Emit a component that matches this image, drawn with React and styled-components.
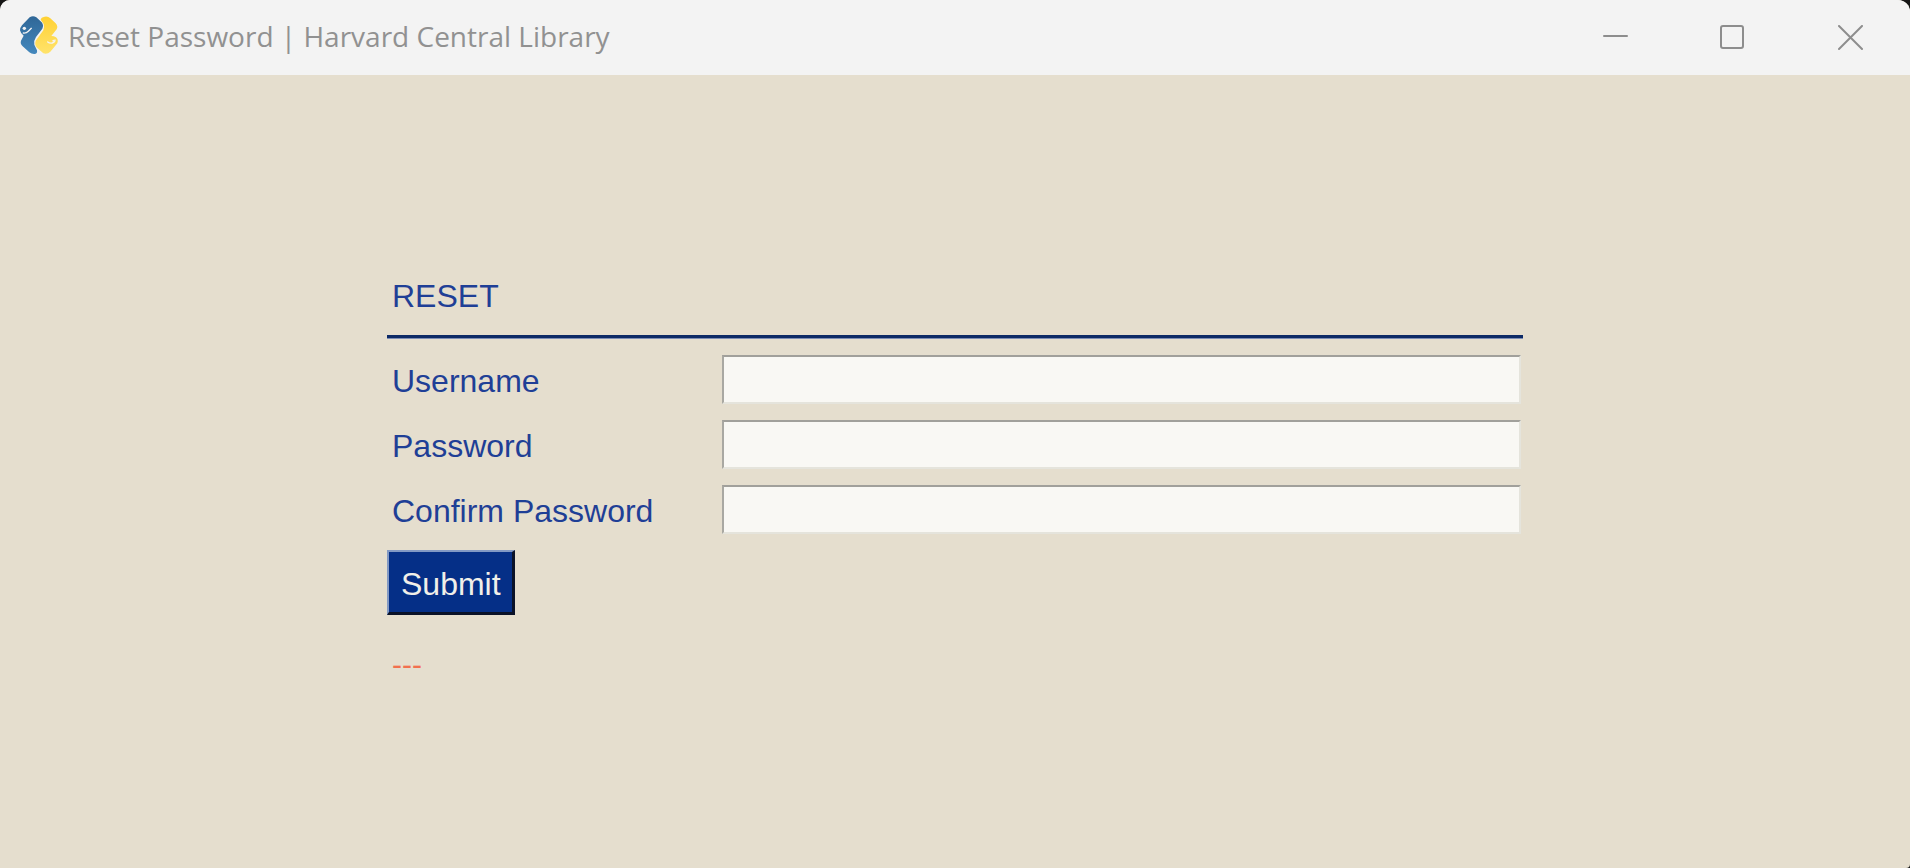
import React from "react";
import styled, { createGlobalStyle } from "styled-components";

const GlobalStyle = createGlobalStyle`
  *, *::before, *::after { box-sizing: border-box; }
  body {
    margin: 0;
    background: #151515;
    font-family: "Liberation Sans", Arial, sans-serif;
  }
`;

const Window = styled.div`
  display: flex;
  flex-direction: column;
  min-height: 100vh;
  overflow: hidden;
  border-radius: 10px 12px 4px 0;
  background: #e5dece;
`;

const TitleBar = styled.header`
  display: flex;
  align-items: center;
  height: 75px;
  padding-left: 19px;
  background: #f3f3f3;
`;

const Logo = styled.svg`
  flex: none;
  width: 40px;
  height: 40px;
  margin-bottom: 6px;
`;

const WindowTitle = styled.h1`
  flex: 1;
  margin: 0 0 4px 9px;
  overflow: hidden;
  white-space: nowrap;
  font: 400 28px/40px "Open Sans", "Noto Sans", sans-serif;
  color: #919191;
`;

const WindowControl = styled.button`
  display: grid;
  place-items: center;
  width: 118px;
  height: 100%;
  padding: 0;
  border: 0;
  background: transparent;

  svg {
    width: 26px;
    height: 26px;
    fill: none;
    stroke: #8d8d8d;
    stroke-width: 2;
    stroke-linecap: round;
  }
`;

const Content = styled.main`
  padding: 201px 16px 0;
`;

const Form = styled.form`
  max-width: 1136px;
  margin: 0 auto;
  font-size: 32px;
  line-height: 40px;
  color: #1f3f96;
`;

const Heading = styled.h2`
  margin: 0;
  padding: 0 5px 19px;
  border-bottom: 3px solid #0d2a66;
  box-shadow: 0 1px #7d8db4;
  font-size: inherit;
  font-weight: 400;
`;

const Fields = styled.div`
  display: grid;
  gap: 16px;
  padding: 17px 2px 16px 0;
`;

const Field = styled.div`
  display: grid;
  grid-template-columns: 335px 1fr;
  align-items: center;
`;

const Label = styled.label`
  padding: 3px 5px 0;
`;

const TextInput = styled.input`
  width: 100%;
  height: 49px;
  padding: 0 8px;
  border: 2px solid;
  border-color: #a1a09b #e5e4dc #e5e4dc #a9a8a2;
  border-radius: 0;
  outline: none;
  background: #f9f8f4;
  font: inherit;
`;

const SubmitButton = styled.button`
  display: block;
  height: 65px;
  padding: 3px 11px 0 12px;
  border: 2px solid;
  border-color: #8299c4 #0a1228 #0a1228 #8299c4;
  border-right-width: 3px;
  border-bottom-width: 3px;
  border-radius: 0;
  background: #052f87;
  font: inherit;
  color: #f1efe9;
`;

const Status = styled.p`
  margin: 0;
  padding: 30px 5px 0;
  font-size: 30px;
  color: #f2704f;
`;

const fields = [
  { id: "username", label: "Username", type: "text" },
  { id: "password", label: "Password", type: "password" },
  { id: "confirm", label: "Confirm Password", type: "password" },
];

function PythonLogo() {
  return (
    <Logo viewBox="26 28 120 120" aria-hidden="true">
      <defs>
        <linearGradient id="blue" x1="0" y1="0" x2="0" y2="1">
          <stop offset="0" stopColor="#2f6797" />
          <stop offset="1" stopColor="#4488bd" />
        </linearGradient>
        <linearGradient id="yellow" x1="0" y1="0" x2="0" y2="1">
          <stop offset="0" stopColor="#ffd133" />
          <stop offset="1" stopColor="#ffe36b" />
        </linearGradient>
      </defs>
      <path
        fill="url(#blue)"
        d="M58 35Q68 29 78 35L94 50Q101 58 96 69L77 94Q70 104 72 117L80 134Q82 143 74 145Q64 146 57 140L37 122Q29 114 32 105L40 90Q31 84 29 74Q29 66 35 59Z"
      />
      <path
        fill="url(#yellow)"
        d="M91 42Q92 35 103 33Q113 31 120 38L136 53Q144 62 139 71L123 91Q131 91 137 95Q145 101 141 113L120 138Q111 147 99 143L80 126Q72 118 76 105L99 74Q103 64 100 55Z"
      />
      <g fill="none" stroke="#f3f3f3" strokeWidth="4" strokeLinecap="round">
        <path d="M39 82Q48 83 54 77L63 68" />
        <path d="M112 109Q118 114 126 112Q134 110 134 103" />
      </g>
      <circle cx="42" cy="68" r="5" fill="#f3f3f3" />
      <circle cx="129" cy="105" r="3" fill="#f3f3f3" />
    </Logo>
  );
}

export default function App() {
  return (
    <>
      <GlobalStyle />
      <Window>
        <TitleBar>
          <PythonLogo />
          <WindowTitle>Reset Password | Harvard Central Library</WindowTitle>
          <WindowControl type="button" aria-label="Minimize">
            <svg viewBox="0 0 26 26"><path d="M2 11H25" /></svg>
          </WindowControl>
          <WindowControl type="button" aria-label="Maximize">
            <svg viewBox="0 0 26 26"><rect x="1" y="1" width="22" height="22" rx="2" /></svg>
          </WindowControl>
          <WindowControl type="button" aria-label="Close">
            <svg viewBox="0 0 26 26"><path d="M1 1L24 24M24 1L1 24" /></svg>
          </WindowControl>
        </TitleBar>
        <Content>
          <Form onSubmit={(event) => event.preventDefault()}>
            <Heading>RESET</Heading>
            <Fields>
              {fields.map(({ id, label, type }) => (
                <Field key={id}>
                  <Label htmlFor={id}>{label}</Label>
                  <TextInput id={id} type={type} />
                </Field>
              ))}
            </Fields>
            <SubmitButton type="submit">Submit</SubmitButton>
            <Status role="status">---</Status>
          </Form>
        </Content>
      </Window>
    </>
  );
}
